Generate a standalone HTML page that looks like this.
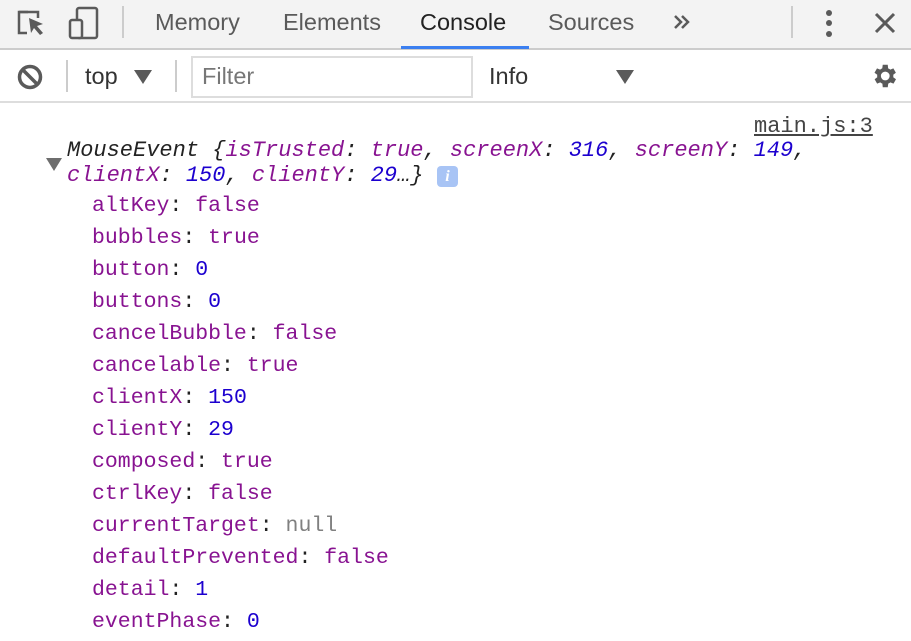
<!DOCTYPE html>
<html><head><style>
body{margin:0;width:911px;height:641px;overflow:hidden;background:#fff;font-family:"Liberation Sans",sans-serif;position:relative}
.a{position:absolute}
.tb1{left:0;top:0;width:911px;height:48px;background:#f3f3f3;border-bottom:2px solid #ccc}
.tab{position:absolute;top:9px;font-size:23.5px;color:#5a5a5a}
.tb2{left:0;top:50px;width:911px;height:51px;background:#fff;border-bottom:2px solid #ddd}
.sep{position:absolute;width:2px;background:#ccc}
.m{font-family:"Liberation Mono",monospace;font-size:21.5px;position:absolute;white-space:pre;color:#222}
.k{color:#881391}.n{color:#1c00cf}.g{color:#808080}
</style></head><body>
<div class="a tb1">
<svg class="a" style="left:16px;top:8px" width="30" height="30" viewBox="0 0 30 30"><path d="M12 4H3v21h8" fill="none" stroke="#5a5a5a" stroke-width="2.5"/><path d="M13 10l14 6-6 2 6 7-3 2-6-7-3 5z" fill="#5a5a5a"/><path d="M3 4h19v6" fill="none" stroke="#5a5a5a" stroke-width="2.5"/></svg>
<svg class="a" style="left:68px;top:6px" width="32" height="34" viewBox="0 0 32 34"><rect x="9" y="2" width="20" height="30" rx="2" fill="none" stroke="#5a5a5a" stroke-width="2.5"/><rect x="2" y="14" width="12" height="18" rx="2" fill="#f3f3f3" stroke="#5a5a5a" stroke-width="2.5"/></svg>
<div class="sep" style="left:122px;top:6px;height:32px"></div>
<div class="tab" style="left:155px">Memory</div>
<div class="tab" style="left:283px">Elements</div>
<div class="tab" style="left:420px;color:#222">Console</div>
<div class="a" style="left:401px;top:46px;width:128px;height:3px;background:#3b7ff0"></div>
<div class="tab" style="left:548px">Sources</div>
<svg class="a" style="left:673px;top:14px" width="18" height="16"><path d="M2 2l6 6-6 6M9 2l6 6-6 6" fill="none" stroke="#5a5a5a" stroke-width="2.5"/></svg>
<div class="sep" style="left:791px;top:6px;height:32px"></div>
<svg class="a" style="left:822px;top:10px" width="14" height="28"><circle cx="7" cy="3" r="3" fill="#5a5a5a"/><circle cx="7" cy="13" r="3" fill="#5a5a5a"/><circle cx="7" cy="24" r="3" fill="#5a5a5a"/></svg>
<svg class="a" style="left:874px;top:12px" width="22" height="22"><path d="M2 2L20 20M20 2L2 20" stroke="#5a5a5a" stroke-width="3"/></svg>
</div>
<div class="a tb2">
<svg class="a" style="left:16px;top:13px" width="28" height="28" viewBox="0 0 28 28"><circle cx="14" cy="14" r="10.5" fill="none" stroke="#5a5a5a" stroke-width="3.5"/><path d="M7 7L21 21" stroke="#5a5a5a" stroke-width="3.5"/></svg>
<div class="sep" style="left:66px;top:10px;height:32px"></div>
<div class="tab" style="left:85px;top:13px;color:#333">top</div>
<svg class="a" style="left:134px;top:20px" width="18" height="14"><path d="M0 0h18L9 14z" fill="#5a5a5a"/></svg>
<div class="sep" style="left:175px;top:10px;height:32px"></div>
<div class="a" style="left:191px;top:6px;width:278px;height:38px;border:2px solid #ddd"></div>
<div class="tab" style="left:202px;top:13px;color:#777">Filter</div>
<div class="tab" style="left:489px;top:13px;color:#333">Info</div>
<svg class="a" style="left:616px;top:20px" width="18" height="14"><path d="M0 0h18L9 14z" fill="#5a5a5a"/></svg>
<svg class="a" style="left:869px;top:11px" width="30" height="30" viewBox="0 0 24 24"><path fill="#5a5a5a" d="M19.4 13a7.5 7.5 0 000-2l2.1-1.6-2-3.5-2.5 1a7 7 0 00-1.7-1L15 3h-4l-.4 2.9a7 7 0 00-1.7 1l-2.5-1-2 3.5L6.6 11a7.5 7.5 0 000 2l-2.1 1.6 2 3.5 2.5-1a7 7 0 001.7 1L11 21h4l.4-2.9a7 7 0 001.7-1l2.5 1 2-3.5zM13 15.5a3.5 3.5 0 110-7 3.5 3.5 0 010 7z"/></svg>
</div>
<div class="m" style="left:754px;top:114px;font-size:22px;color:#444;text-decoration:underline">main.js:3</div>
<svg class="a" style="left:46px;top:158px" width="16" height="13"><path d="M0 0h16L8 13z" fill="#6e6e6e"/></svg>
<div class="m" style="left:67px;top:138px;font-style:italic;font-size:22px">MouseEvent {<span class="k">isTrusted</span>: <span class="k">true</span>, <span class="k">screenX</span>: <span class="n">316</span>, <span class="k">screenY</span>: <span class="n">149</span>,</div>
<div class="m" style="left:67px;top:163px;font-style:italic;font-size:22px"><span class="k">clientX</span>: <span class="n">150</span>, <span class="k">clientY</span>: <span class="n">29</span>…}</div>
<div class="a" style="left:437px;top:166px;width:21px;height:21px;border-radius:4px;background:#a8c4f5;color:#fff;font:bold italic 16px 'Liberation Serif',serif;text-align:center;line-height:21px">i</div>
<div class="m" style="left:92px;top:190px;line-height:32px"><span class="k">altKey</span>: <span class="k">false</span>
<span class="k">bubbles</span>: <span class="k">true</span>
<span class="k">button</span>: <span class="n">0</span>
<span class="k">buttons</span>: <span class="n">0</span>
<span class="k">cancelBubble</span>: <span class="k">false</span>
<span class="k">cancelable</span>: <span class="k">true</span>
<span class="k">clientX</span>: <span class="n">150</span>
<span class="k">clientY</span>: <span class="n">29</span>
<span class="k">composed</span>: <span class="k">true</span>
<span class="k">ctrlKey</span>: <span class="k">false</span>
<span class="k">currentTarget</span>: <span class="g">null</span>
<span class="k">defaultPrevented</span>: <span class="k">false</span>
<span class="k">detail</span>: <span class="n">1</span>
<span class="k">eventPhase</span>: <span class="n">0</span></div>
</body></html>
